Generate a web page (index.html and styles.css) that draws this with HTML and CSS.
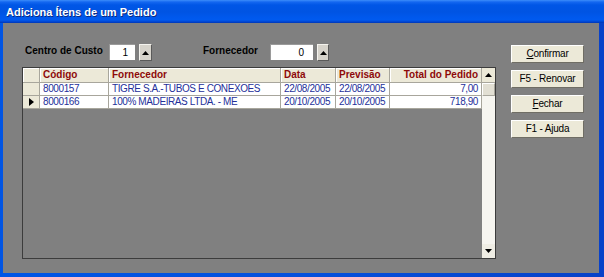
FILE: index.html
```html
<!DOCTYPE html>
<html>
<head>
<meta charset="utf-8">
<link rel="stylesheet" href="styles.css">
</head>
<body>
<div class="window">
  <div class="titlebar"><span class="title">Adiciona Ítens de um Pedido</span></div>
  <div class="client">
    <div class="main">
      <div class="controls">
        <span class="label lbl-cc">Centro de Custo</span>
        <div class="input in-cc">1</div>
        <div class="spin"><svg width="7" height="4" viewBox="0 0 7 4"><polygon points="0,4 7,4 3.5,0" fill="#000"/></svg></div>
        <span class="label lbl-forn">Fornecedor</span>
        <div class="input in-forn">0</div>
        <div class="spin spin2"><svg width="7" height="4" viewBox="0 0 7 4"><polygon points="0,4 7,4 3.5,0" fill="#000"/></svg></div>
      </div>
      <div class="grid">
        <div class="table">
          <div class="row head">
            <div class="cell ind"></div>
            <div class="cell">Código</div>
            <div class="cell">Fornecedor</div>
            <div class="cell">Data</div>
            <div class="cell">Previsão</div>
            <div class="cell num">Total do Pedido</div>
          </div>
          <div class="row">
            <div class="cell ind"></div>
            <div class="cell">8000157</div>
            <div class="cell">TIGRE S.A.-TUBOS E CONEXOES</div>
            <div class="cell">22/08/2005</div>
            <div class="cell">22/08/2005</div>
            <div class="cell num">7,00</div>
          </div>
          <div class="row">
            <div class="cell ind"><svg class="ptr" width="5" height="8" viewBox="0 0 5 8"><polygon points="0,0 5,4 0,8" fill="#000"/></svg></div>
            <div class="cell">8000166</div>
            <div class="cell">100% MADEIRAS LTDA. - ME</div>
            <div class="cell">20/10/2005</div>
            <div class="cell">20/10/2005</div>
            <div class="cell num">718,90</div>
          </div>
        </div>
        <div class="scrollbar">
          <div class="sb-btn sb-up"><svg width="7" height="4" viewBox="0 0 7 4"><polygon points="0,4 7,4 3.5,0" fill="#000"/></svg></div>
          <div class="sb-thumb"></div>
          <div class="sb-track"></div>
          <div class="sb-btn sb-down"><svg width="7" height="4" viewBox="0 0 7 4"><polygon points="0,0 7,0 3.5,4" fill="#000"/></svg></div>
        </div>
      </div>
    </div>
    <div class="buttons">
      <div class="btn"><u>C</u>onfirmar</div>
      <div class="btn">F5 - Renovar</div>
      <div class="btn"><u>F</u>echar</div>
      <div class="btn">F1 - Ajuda</div>
    </div>
  </div>
</div>
</body>
</html>
```
FILE: styles.css
```css
* { box-sizing: border-box; }
body {
  margin: 0;
  width: 604px;
  height: 277px;
  overflow: hidden;
  font-family: "Liberation Sans", Arial, sans-serif;
}
.window {
  width: 604px;
  height: 277px;
  display: flex;
  flex-direction: column;
  background: linear-gradient(to right, #0055E5 0px, #0650DC 50%, #0841C8 100%);
}
.titlebar {
  height: 23px;
  flex: none;
  display: flex;
  align-items: center;
  padding-left: 6px;
  background: linear-gradient(to bottom, #3C8DFA 0px, #1467F0 2px, #0056E6 5px, #0054E3 12px, #0058EC 17px, #005AEF 20px, #0042CC 22px, #0036B4 23px);
}
.title {
  color: #fff;
  font-weight: bold;
  font-size: 11px;
  text-shadow: 1px 1px 0 #0A2A80;
  margin-top: 1px;
}
.client {
  flex: 1;
  margin: 0 5px 4px 3px;
  background: #808080;
  display: flex;
  padding: 21px 0 0 19px;
}
.main {
  width: 474px;
  display: flex;
  flex-direction: column;
}
.controls {
  height: 17px;
  margin-bottom: 6px;
  display: flex;
  align-items: flex-start;
  padding-left: 3px;
}
.label {
  font-weight: bold;
  font-size: 10px;
  line-height: 14px;
  color: #000;
}
.lbl-cc { width: 84px; }
.lbl-forn { width: 67px; margin-left: 51px; }
.input {
  height: 16px;
  background: #fff;
  border-top: 1px solid #9A9A9A;
  border-left: 1px solid #9A9A9A;
  text-align: right;
  font-size: 10px;
  line-height: 15px;
  color: #000;
}
.in-cc { width: 26px; padding-right: 7px; }
.in-forn { width: 43px; padding-right: 9px; }
.spin {
  width: 13px;
  height: 17px;
  margin-left: 4px;
  background: #D6D3CB;
  border: 1px solid;
  border-color: #F4F3EE #5A5A5A #5A5A5A #F4F3EE;
  display: flex;
  align-items: center;
  justify-content: center;
}
.spin2 { width: 12px; }
.grid {
  height: 192px;
  border: 1px solid #3C3C3C;
  display: flex;
}
.table { width: 459px; }
.row {
  display: grid;
  grid-template-columns: 17px 69px 172px 55px 54px 92px;
  height: 13px;
}
.row.head { height: 15px; }
.cell {
  background: #fff;
  border-right: 1px solid #A8A69C;
  border-bottom: 1px solid #A8A69C;
  color: #24309A;
  font-size: 10px;
  letter-spacing: -0.4px;
  line-height: 12px;
  padding-left: 3px;
  white-space: nowrap;
  overflow: hidden;
}
.head .cell {
  background: #ECE9D8;
  color: #8E0A0A;
  font-weight: bold;
  letter-spacing: 0;
  line-height: 14px;
  box-shadow: inset 1px 1px 0 #FFFFFF;
}
.cell.ind {
  background: #ECE9D8;
  display: flex;
  align-items: center;
  padding-left: 6px;
}
.head .cell.num,
.cell.num { text-align: right; padding-right: 3px; }
.scrollbar {
  width: 13px;
  display: flex;
  flex-direction: column;
  background: #F4F3EC;
}
.sb-btn {
  background: #ECE9D8;
  display: flex;
  align-items: center;
  justify-content: center;
}
.sb-up { height: 15px; border-bottom: 1px solid #A8A69C; }
.sb-thumb {
  height: 13px;
  background: #E2DFD3;
  border: 1px solid;
  border-color: #FFFFFF #A8A69C #A8A69C #FFFFFF;
}
.sb-track { flex: 1; background: #F6F5F0; }
.sb-down { height: 14px; background: #F0EEE5; }
.buttons {
  margin-left: 15px;
  margin-top: 1px;
  display: flex;
  flex-direction: column;
  gap: 7px;
}
.btn {
  width: 73px;
  height: 18px;
  background: #ECE9D8;
  border: 1px solid;
  border-color: #FFFFFF #6F6D64 #6F6D64 #FFFFFF;
  font-size: 10px;
  letter-spacing: -0.2px;
  line-height: 16px;
  text-align: center;
  color: #000;
}
```
